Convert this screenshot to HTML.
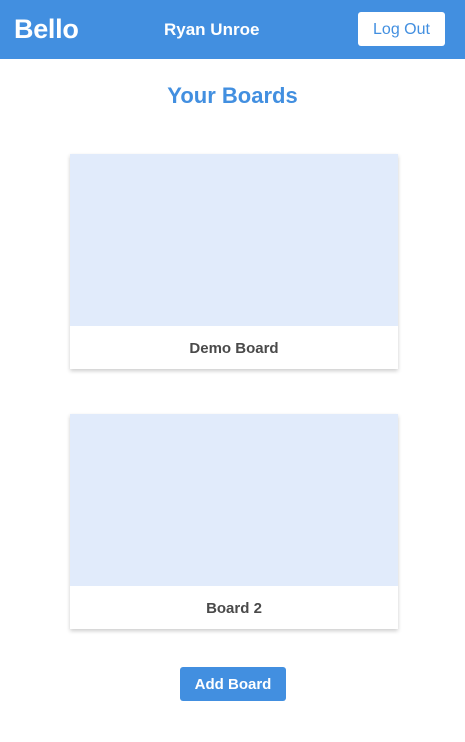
<!DOCTYPE html>
<html><head><style>
body{margin:0;width:465px;height:742px;background:#fff;font-family:"Liberation Sans",sans-serif;position:relative;overflow:hidden}
.hdr{position:absolute;left:0;top:0;width:465px;height:59px;background:#428fe0}
.logo{position:absolute;left:14px;top:14px;color:#fff;font-weight:bold;font-size:27px;letter-spacing:-0.3px}
.name{position:absolute;left:164px;top:20px;color:#fff;font-weight:bold;font-size:17px}
.btn{position:absolute;left:358px;top:12px;width:87px;height:34px;background:#fff;border-radius:3px;color:#428fe0;font-size:16px;text-align:center;line-height:36px}
h1{position:absolute;left:0;width:465px;top:83px;margin:0;text-align:center;color:#428fe0;font-size:22px;font-weight:bold}
.card{position:absolute;left:70px;width:328px;height:215px;background:#fff;box-shadow:0 2px 4px rgba(0,0,0,.2)}
.card .img{height:172px;background:#e1ebfb}
.card .t{text-align:center;color:#4a4a4a;font-size:15px;font-weight:bold;line-height:46px}
.add{position:absolute;left:180px;top:667px;width:106px;height:34px;background:#428fe0;border-radius:3px;color:#fff;font-weight:bold;font-size:15px;text-align:center;line-height:36px}
</style></head><body>
<div class="hdr"><div class="logo">Bello</div><div class="name">Ryan Unroe</div><div class="btn">Log Out</div></div>
<h1>Your Boards</h1>
<div class="card" style="top:154px"><div class="img"></div><div class="t">Demo Board</div></div>
<div class="card" style="top:414px"><div class="img"></div><div class="t">Board 2</div></div>
<div class="add">Add Board</div>
</body></html>
